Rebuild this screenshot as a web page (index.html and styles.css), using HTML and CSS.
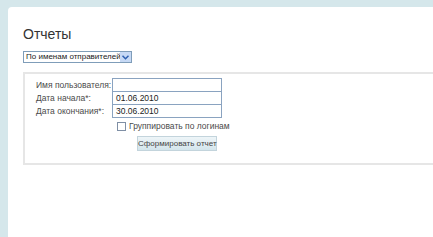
FILE: index.html
```html
<!DOCTYPE html>
<html lang="ru">
<head>
    <meta charset="UTF-8">
    <title>Отчеты</title>
    <link rel="stylesheet" href="styles.css">
</head>
<body>
    <div class="page">
        <h1 class="title">Отчеты</h1>
        <div class="select">
            <span class="select-text">По именам отправителей</span>
            <span class="select-btn">
                <svg width="7" height="5" viewBox="0 0 7 5"><path d="M0.5 0.8 L3.5 3.8 L6.5 0.8" fill="none" stroke="#2d5fb0" stroke-width="1.5"/></svg>
            </span>
        </div>
        <div class="box">
            <div class="form">
                <label class="lbl">Имя пользователя:</label>
                <div class="inp"></div>
                <label class="lbl">Дата начала*:</label>
                <div class="inp">01.06.2010</div>
                <label class="lbl">Дата окончания*:</label>
                <div class="inp">30.06.2010</div>
                <span></span>
                <div class="check"><span class="cb"></span>Группировать по логинам</div>
                <span></span>
                <div class="actions"><button class="btn">Сформировать отчет</button></div>
            </div>
        </div>
    </div>
</body>
</html>
```

FILE: styles.css
```css
* {
    margin: 0;
    padding: 0;
    box-sizing: border-box;
}

body {
    background: #d5e7eb;
    padding: 7px 0 0 8px;
    height: 237px;
    overflow: hidden;
    font-family: "Liberation Sans", Arial, sans-serif;
    color: #444;
}

.page {
    background: #fff;
    border-top-left-radius: 4px;
    height: 230px;
    padding: 18px 0 0 15px;
}

.title {
    font-weight: normal;
    font-size: 14px;
    color: #333;
    line-height: 18px;
    height: 26px;
}

.select {
    display: flex;
    align-items: center;
    border: 1px solid #7f9db9;
    height: 12px;
    width: 109px;
    font-size: 8px;
    color: #222;
}

.select-text {
    flex: 1;
    padding-left: 2px;
    line-height: 10px;
    white-space: nowrap;
    overflow: hidden;
}

.select-btn {
    width: 11px;
    height: 10px;
    background: #c6d9f5;
    display: flex;
    align-items: center;
    justify-content: center;
}

.box {
    margin-top: 9px;
    border: 2px solid #e6e6e6;
    border-right: none;
    height: 93px;
    padding: 4px 0 0 10px;
}

.form {
    display: grid;
    grid-template-columns: 77px 110px;
    align-items: center;
    font-size: 8.5px;
    white-space: nowrap;
    color: #4a4a4a;
}

.lbl {
    height: 13px;
    line-height: 13px;
    padding-left: 1px;
}

.inp {
    height: 14px;
    border: 1px solid #8aa3c0;
    margin-top: -1px;
    color: #222;
    line-height: 12px;
    padding-left: 3px;
}

.inp:nth-child(2) {
    margin-top: 0;
}

.check {
    display: flex;
    align-items: center;
    height: 16px;
    padding-left: 5px;
}

.cb {
    flex-shrink: 0;
    width: 9px;
    height: 9px;
    border: 1px solid #7f8fa5;
    margin-right: 3px;
}

.actions {
    padding: 2px 0 0 25px;
}

.btn {
    width: 80px;
    height: 15px;
    border: 1px solid #c3d4dc;
    background: linear-gradient(#eef5f8, #d3e5ec);
    font-family: "Liberation Sans", Arial, sans-serif;
    font-size: 8px;
    color: #444;
    white-space: nowrap;
}
```
